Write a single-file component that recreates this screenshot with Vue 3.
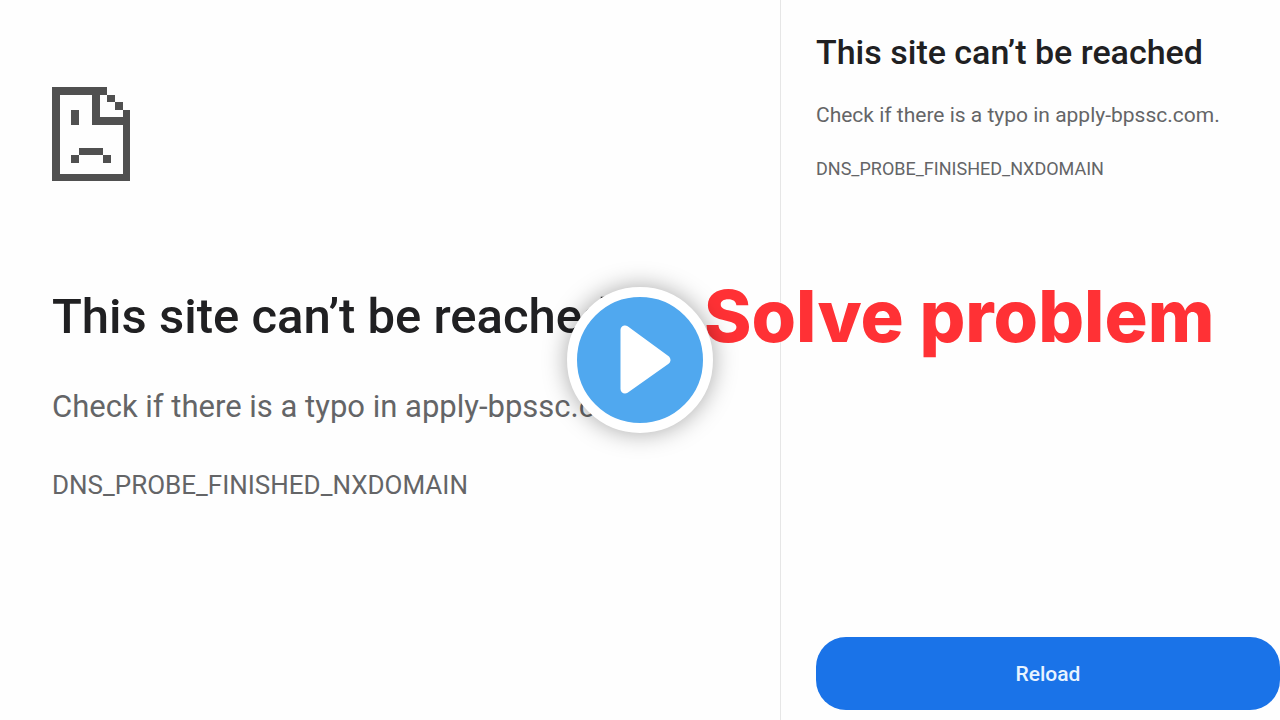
<script setup>
const title = 'This site can’t be reached'
const hint = 'Check if there is a typo in apply-bpssc.com.'
const code = 'DNS_PROBE_FINISHED_NXDOMAIN'
</script>

<template>
  <main class="page">
    <section class="panel large">
      <svg class="sad" viewBox="0 0 234 282" shape-rendering="crispEdges" aria-hidden="true">
        <path d="M0 0H165V23H188V46H212V68H234V282H0ZM24 23V260H212V113H121V23ZM144 23V91H212V68H188V46H165V23Z" fill-rule="evenodd" />
        <path d="M58 68H81V113H58ZM81 182H153V204H81ZM58 204H81V227H58ZM153 204H176V227H153Z" />
      </svg>
      <h1>{{ title }}</h1>
      <p class="hint">{{ hint }}</p>
      <p class="code">{{ code }}</p>
    </section>
    <section class="panel small">
      <h2>{{ title }}</h2>
      <p class="hint">{{ hint }}</p>
      <p class="code">{{ code }}</p>
      <button class="reload" type="button">Reload</button>
    </section>
    <strong class="caption">Solve problem</strong>
    <button class="play" type="button" aria-label="Play">
      <svg viewBox="0 0 52 70" aria-hidden="true">
        <path d="M6 5V64L47 35Z" />
      </svg>
    </button>
  </main>
</template>

<style>
body {
  margin: 0;
  background: #fefefe;
}
</style>

<style scoped>
.page {
  position: relative;
  display: grid;
  grid-template-columns: 39fr 25fr;
  min-height: 100vh;
  overflow: hidden;
  background: #fefefe;
  color: #646567;
  font-family: Roboto, "Liberation Sans", sans-serif;
}
.panel {
  display: flex;
  flex-direction: column;
  box-sizing: border-box;
  min-width: 0;
  white-space: nowrap;
}
h1,
h2,
p {
  margin: 0;
  font-weight: 400;
}
h1,
h2 {
  color: #202022;
  font-weight: 500;
}
.large {
  padding: 87px 0 0 52px;
}
.sad {
  width: 78px;
  height: 94px;
  fill: #505050;
}
.large h1 {
  margin-top: 108px;
  font-size: 49px;
  line-height: 56px;
}
.large .hint {
  margin-top: 44px;
  font-size: 31px;
  line-height: 36px;
}
.large .code {
  margin-top: 44px;
  font-size: 26px;
  line-height: 32px;
}
.small {
  padding: 32px 0 10px 35px;
  border-left: 1px solid #e6e6e6;
}
.small h2 {
  font-size: 34px;
  line-height: 40px;
}
.small .hint {
  margin-top: 30px;
  font-size: 21px;
  line-height: 26px;
}
.small .code {
  margin-top: 30px;
  font-size: 18px;
  line-height: 22px;
}
.reload {
  height: 73px;
  margin-top: auto;
  border: 0;
  border-radius: 30px;
  background: #1a73e8;
  color: #e8f4ff;
  font: 500 21px/26px Roboto, "Liberation Sans", sans-serif;
}
.caption {
  position: absolute;
  top: 274px;
  left: 55%;
  color: #ff3135;
  font: 800 72px/84px Inter, "Liberation Sans", sans-serif;
  white-space: nowrap;
}
.play {
  position: absolute;
  top: 50%;
  left: 50%;
  display: flex;
  align-items: center;
  justify-content: center;
  box-sizing: border-box;
  width: 146px;
  height: 146px;
  padding: 0 0 0 10px;
  border: 10px solid #fff;
  border-radius: 50%;
  background: #50a8ef;
  box-shadow: 0 0 24px rgba(0, 0, 0, 0.35);
  transform: translate(-50%, -50%);
}
.play svg {
  width: 52px;
  height: 70px;
  fill: #fff;
  stroke: #fff;
  stroke-width: 9px;
  stroke-linejoin: round;
}
</style>
